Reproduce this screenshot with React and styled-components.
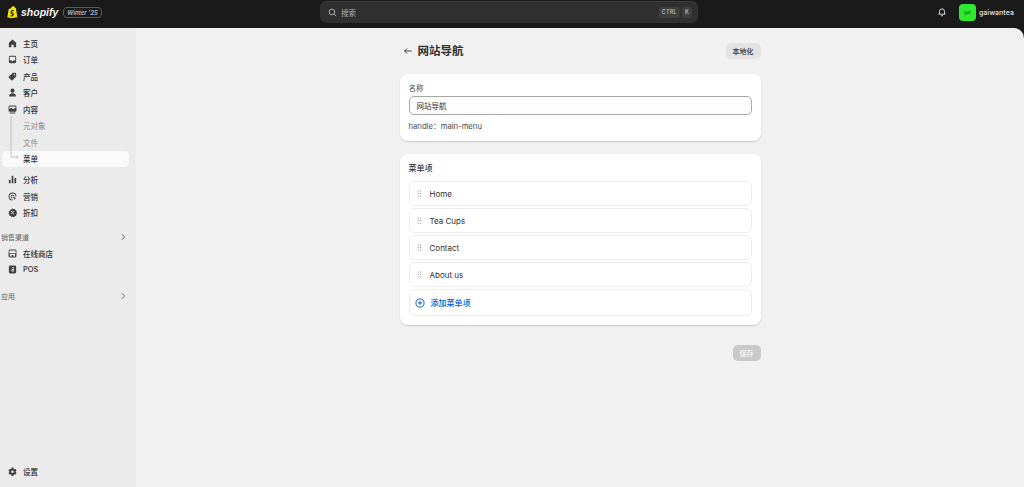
import React from "react";
import styled, { createGlobalStyle } from "styled-components";

const GlobalStyle = createGlobalStyle`
  html, body {
    margin: 0;
    padding: 0;
    height: 100%;
    overflow: hidden;
    background: #1a1a1a;
    font-family: Inter, "Noto Sans CJK SC", sans-serif;
    color: #303030;
  }
  #root { height: 100%; }
  * { box-sizing: border-box; }
`;

const Page = styled.div`
  width: 1024px;
  height: 487px;
  display: flex;
  flex-direction: column;
  background: #1a1a1a;
`;

const TopBar = styled.header`
  flex: 0 0 28px;
  display: grid;
  grid-template-columns: 313px 378px 1fr;
  align-items: center;
  padding: 0 3px 4px 7px;
  height: 28px;
`;

const Brand = styled.div`
  display: flex;
  align-items: center;
`;

const Wordmark = styled.span`
  margin-left: 3px;
  font-family: "Liberation Sans", sans-serif;
  font-style: italic;
  font-weight: 700;
  font-size: 10.5px;
  color: #f4f4f4;
`;

const Badge = styled.span`
  margin-left: 5px;
  height: 11px;
  padding: 0 3px;
  display: flex;
  align-items: center;
  border: 1px solid #5c5c5c;
  border-radius: 4px;
  font-size: 6px;
  font-style: italic;
  font-weight: 600;
  color: #b5bfc9;
  white-space: nowrap;
`;

const Search = styled.div`
  height: 22px;
  padding: 0 6px 0 8px;
  display: flex;
  align-items: center;
  background: #303030;
  border-radius: 7px;
  box-shadow: inset 0 1px 0 #3c3c3c;
`;

const SearchLabel = styled.span`
  flex: 1;
  margin-left: 4px;
  font-size: 7.5px;
  color: #b0b0b0;
`;

const Key = styled.span`
  height: 11px;
  margin-left: 2px;
  padding: 0 3px;
  display: flex;
  align-items: center;
  background: #3f3f3f;
  border-radius: 3px;
  font-size: 5.5px;
  font-weight: 600;
  letter-spacing: 0.2px;
  color: #b5b5b5;
`;

const TopRight = styled.div`
  display: flex;
  align-items: center;
  justify-content: flex-end;
  padding-right: 7px;
`;

const Store = styled.div`
  display: flex;
  align-items: center;
  margin-left: 12px;
`;

const StoreAvatar = styled.span`
  width: 17px;
  height: 17px;
  display: flex;
  align-items: center;
  justify-content: center;
  background: #2eea2e;
  border-radius: 4px;
  font-size: 4.5px;
  font-weight: 600;
  color: #0d7d0d;
`;

const StoreName = styled.span`
  margin-left: 3px;
  font-size: 7px;
  font-weight: 600;
  color: #d8d8d8;
`;

const Body = styled.div`
  flex: 1;
  min-height: 0;
  display: flex;
  overflow: hidden;
  border-radius: 0 10px 0 0;
  background: #f1f1f1;
`;

const Sidebar = styled.nav`
  flex: 0 0 136px;
  display: flex;
  flex-direction: column;
  padding: 7px 7px 7px 2px;
  background: #ebebeb;
`;

const NavRow = styled.div`
  position: relative;
  height: 16.5px;
  padding-left: 6px;
  display: flex;
  align-items: center;
  gap: 6px;
  border-radius: 5px;
  font-size: 7.5px;
  font-weight: ${(p) => (p.$sub ? 400 : 500)};
  color: ${(p) => (p.$sub ? "#8a8a8a" : "#303030")};
  background: ${(p) => (p.$active ? "#fafafa" : "transparent")};
  margin-bottom: ${(p) => (p.$gap ? `${p.$gap}px` : 0)};
`;

const NavIcon = styled.span`
  width: 9px;
  height: 9px;
  flex: none;
  display: flex;
`;

const NavIndent = styled.span`
  width: 9px;
  flex: none;
`;

const TreeLine = styled.svg`
  position: absolute;
  left: 8px;
  bottom: 7px;
  width: 10px;
  height: 44px;
`;

const SectionHead = styled.div`
  height: 16px;
  margin: ${(p) => p.$margin};
  padding-right: 2px;
  display: flex;
  align-items: center;
  justify-content: space-between;
  font-size: 7px;
  color: #5f5f5f;
`;

const Push = styled.div`
  margin-top: auto;
`;

const Main = styled.main`
  flex: 1;
  display: flex;
  justify-content: center;
  padding-top: 14px;
`;

const Column = styled.div`
  width: 361px;
`;

const Header = styled.div`
  height: 18px;
  margin-bottom: 14px;
  padding-left: 3px;
  display: flex;
  align-items: center;
`;

const Title = styled.h1`
  flex: 1;
  margin: -2px 0 0 5px;
  font-size: 11.5px;
  font-weight: 700;
  color: #303030;
`;

const LocalizeButton = styled.button`
  height: 16px;
  padding: 0 7px;
  border: 0;
  border-radius: 5px;
  background: #e3e3e3;
  font: 500 7px Inter, "Noto Sans CJK SC", sans-serif;
  color: #303030;
`;

const Card = styled.section`
  margin-bottom: 13px;
  padding: ${(p) => p.$padding};
  background: #fff;
  border-radius: 8px;
  box-shadow: 0 1px 1.5px rgba(0, 0, 0, 0.16);
`;

const FieldLabel = styled.label`
  display: block;
  height: 11px;
  line-height: 11px;
  margin-bottom: 2px;
  font-size: 7.5px;
  color: #4a4a4a;
`;

const TextField = styled.div`
  height: 19px;
  padding-left: 7px;
  display: flex;
  align-items: center;
  border: 1px solid #a8a8a8;
  border-radius: 5px;
  background: #fdfdfd;
  font-size: 7.5px;
  color: #303030;
`;

const Hint = styled.div`
  margin-top: 6px;
  font-size: 7.7px;
  line-height: 11px;
  color: #4a4a4a;
`;

const CardTitle = styled.h2`
  margin: 0 0 6px;
  height: 14px;
  line-height: 14px;
  font-size: 8px;
  font-weight: 500;
  color: #303030;
`;

const ItemList = styled.div`
  display: flex;
  flex-direction: column;
  gap: 2px;
`;

const Item = styled.div`
  height: ${(p) => (p.$add ? 27 : 25)}px;
  display: flex;
  align-items: center;
  padding-left: ${(p) => (p.$add ? 5 : 7)}px;
  border: 1px solid #ececec;
  border-radius: 6px;
  font-size: 8px;
  color: #303030;
`;

const ItemLabel = styled.span`
  margin-left: ${(p) => p.$offset}px;
`;

const AddLabel = styled.span`
  margin-left: 6px;
  font-size: 8px;
  font-weight: 500;
  color: #005bd3;
`;

const Footer = styled.div`
  display: flex;
  justify-content: flex-end;
  margin-top: 20px;
`;

const SaveButton = styled.button`
  width: 28px;
  height: 16px;
  padding: 0;
  border: 0;
  border-radius: 5px;
  background: #c9c9c9;
  font: 600 7px Inter, "Noto Sans CJK SC", sans-serif;
  color: #f3f3f3;
`;

const icons = {
  home: <path d="M8 1 1.500 6.500V14.500h4.500v-4.500h4v4.500h4.500V6.500z" />,
  orders: (
    <path
      fillRule="evenodd"
      d="M4 1.500h8A2.500 2.500 0 0 1 14.500 4v8a2.500 2.500 0 0 1-2.500 2.500H4A2.500 2.500 0 0 1 1.500 12V4A2.500 2.500 0 0 1 4 1.500zM3 9.500h3l1 1.500h2l1-1.500h3V4a1 1 0 0 0-1-1H4a1 1 0 0 0-1 1z"
    />
  ),
  products: (
    <path
      fillRule="evenodd"
      d="M9 1.500h4A1.500 1.500 0 0 1 14.500 3v5L8 14.500a1.500 1.500 0 0 1-2 0L1.500 10a1.500 1.500 0 0 1 0-2zM11.500 3.500a1 1 0 1 0 0 2.500 1 1 0 0 0 0-2.500z"
    />
  ),
  customers: (
    <path d="M8 1a3.700 3.700 0 1 1 0 7.400A3.700 3.700 0 0 1 8 1zM2 14c0-3 2.300-4.500 6-4.500s6 1.500 6 4.500v1H2z" />
  ),
  content: (
    <path
      fillRule="evenodd"
      d="M3 1h10a2 2 0 0 1 2 2v7a2 2 0 0 1-2 2H3a2 2 0 0 1-2-2V3a2 2 0 0 1 2-2zM2.500 3v4l3.500-2 3 2.500L13.500 5V3a.5.5 0 0 0-.5-.5H3a.5.5 0 0 0-.5.5zM3 13.500h10V15H3z"
    />
  ),
  analytics: <path d="M1.500 9h3v5.500h-3zM6.500 1.500h3v13h-3zM11.500 5.500h3v9h-3z" />,
  marketing: (
    <path
      fillRule="evenodd"
      d="M8 1a7 7 0 0 1 7 7h-1.700A5.300 5.300 0 1 0 8 13.300V15A7 7 0 0 1 8 1zM8 4.700A3.300 3.300 0 0 1 11.300 8H9.700A1.700 1.700 0 1 0 8 9.700v1.600a3.300 3.300 0 0 1 0-6.600zM9 8.500l6 2.200-2.500 1-1 2.800z"
    />
  ),
  discount: (
    <path
      fillRule="evenodd"
      d="M8 .5l2 1.500 2.500-.3.800 2.200 2.200 1.100-.4 2.500 1.400 2-1.700 1.700-.1 2.500-2.400.5-1.300 2.100-2.300-.8-2.400.8-1.300-2.100-2.400-.5-.1-2.500L.4 10.500l1.400-2-.4-2.500 2.200-1.100.8-2.200L6.900 2zM6 5a1 1 0 1 0 0 2 1 1 0 0 0 0-2zm4 4a1 1 0 1 0 0 2 1 1 0 0 0 0-2zM5.500 10l1 1 4-5-1-1z"
    />
  ),
  store: (
    <path
      fillRule="evenodd"
      d="M3.500 1h9A2.500 2.500 0 0 1 15 3.500v9a2.500 2.500 0 0 1-2.500 2.500h-9A2.500 2.500 0 0 1 1 12.500v-9A2.500 2.500 0 0 1 3.500 1zM3 2.700c-.4 0-.6.3-.6.700v4.100h11.200V3.400c0-.4-.2-.7-.6-.7zM3.500 9v4.300H6.500V10.500h3v2.800h3V9z"
    />
  ),
  pos: (
    <path
      fillRule="evenodd"
      d="M4 1h8a2.500 2.500 0 0 1 2.500 2.500v9A2.500 2.500 0 0 1 12 15H4a2.500 2.500 0 0 1-2.500-2.500v-9A2.500 2.500 0 0 1 4 1zM7 4v1.500h2.500V7H7.500L6 8.500v2L7.500 12H9l1.500-1.500v-1L9 8.500h1.500V4zm.5 5.500h1.500V11H7.500z"
    />
  ),
  settings: (
    <path
      fillRule="evenodd"
      d="M6.500 1h3l.5 2 1.700 1 2-.6 1.500 2.600-1.500 1.400v2l1.500 1.400-1.500 2.600-2-.6-1.700 1-.5 2h-3l-.5-2-1.700-1-2 .6L.8 10.800l1.500-1.400v-2L.8 6l1.500-2.600 2 .6L6 3zM8 6a2.300 2.300 0 1 0 0 4.600A2.300 2.300 0 0 0 8 6z"
    />
  ),
};

const Icon = ({ name }) => (
  <NavIcon>
    <svg viewBox="0 0 16 16" width="9" height="9" fill="#404040">
      {icons[name]}
    </svg>
  </NavIcon>
);

const Chevron = () => (
  <svg viewBox="0 0 10 10" width="8" height="8" fill="none" stroke="#616161" strokeWidth="1.200">
    <path d="M3.500 1.500 7 5 3.500 8.500" />
  </svg>
);

const DragHandle = () => (
  <svg viewBox="0 0 6 8" width="5" height="7" fill="#6b6b6b">
    {[1, 4].map((x) =>
      [1, 4, 7].map((y) => <circle key={`${x}-${y}`} cx={x + 0.5} cy={y} r="0.65" />)
    )}
  </svg>
);

const mainNav = [
  ["home", "主页"],
  ["orders", "订单"],
  ["products", "产品"],
  ["customers", "客户"],
  ["content", "内容"],
];

const moreNav = [
  ["analytics", "分析"],
  ["marketing", "营销"],
  ["discount", "折扣"],
];

const menuItems = ["Home", "Tea Cups", "Contact", "About us"];

const App = () => (
  <Page>
    <GlobalStyle />
    <TopBar>
      <Brand>
        <svg viewBox="0 0 16 18" width="11" height="14">
          <path d="M2.500 4.500 6 3.500C6.500 1.500 8 .5 9.500.8 11 1 11.500 2 11.700 3l1.300.2L15 16.500 5.500 18 .5 16.500z" fill="#f5e400" />
          <path d="M9.800 6.500 9.300 8.200c-1.300-.6-2.500-.2-2.500.6 0 1.200 3 1.500 3 4 0 2-1.500 3-3 2.900-1 0-1.800-.5-2.200-1l.5-1.500c.5.400 1.200.9 1.800.9.500 0 .8-.4.800-.8 0-1.500-2.500-1.600-2.500-4 0-2 1.500-3.500 3.500-3.500.4 0 .6.300.9.700z" fill="#1a1a1a" />
        </svg>
        <Wordmark>shopify</Wordmark>
        <Badge>Winter '25</Badge>
      </Brand>
      <Search>
        <svg viewBox="0 0 16 16" width="9" height="9" fill="none" stroke="#c4c4c4" strokeWidth="1.500">
          <circle cx="7" cy="7" r="5" />
          <path d="m11 11 3.500 3.500" />
        </svg>
        <SearchLabel>搜索</SearchLabel>
        <Key>CTRL</Key>
        <Key>K</Key>
      </Search>
      <TopRight>
        <svg viewBox="0 0 16 16" width="10" height="10" fill="none" stroke="#e3e3e3" strokeWidth="1.500">
          <path d="M3 11.500c1-1 1-2.500 1-4.500a4 4 0 0 1 8 0c0 2 0 3.500 1 4.500z" />
          <path d="M6.500 14h3" />
        </svg>
        <Store>
          <StoreAvatar>gai</StoreAvatar>
          <StoreName>gaiwantea</StoreName>
        </Store>
      </TopRight>
    </TopBar>
    <Body>
      <Sidebar>
        {mainNav.map(([icon, label]) => (
          <NavRow key={label}>
            <Icon name={icon} />
            {label}
          </NavRow>
        ))}
        <NavRow $sub>
          <NavIndent />
          元对象
        </NavRow>
        <NavRow $sub>
          <NavIndent />
          文件
        </NavRow>
        <NavRow $active $gap={4.500}>
          <TreeLine viewBox="0 0 10 44" fill="none" stroke="#b5b5b5" strokeWidth="0.800">
            <path d="M1 0v41h7M6.500 39.500 8 41l-1.500 1.500" />
          </TreeLine>
          <NavIndent />
          菜单
        </NavRow>
        {moreNav.map(([icon, label]) => (
          <NavRow key={label}>
            <Icon name={icon} />
            {label}
          </NavRow>
        ))}
        <SectionHead $margin="8px 0 0 -1px">
          销售渠道
          <Chevron />
        </SectionHead>
        <NavRow>
          <Icon name="store" />
          在线商店
        </NavRow>
        <NavRow>
          <Icon name="pos" />
          POS
        </NavRow>
        <SectionHead $margin="10px 0 0 -1px">
          应用
          <Chevron />
        </SectionHead>
        <Push>
          <NavRow>
            <Icon name="settings" />
            设置
          </NavRow>
        </Push>
      </Sidebar>
      <Main>
        <Column>
          <Header>
            <svg viewBox="0 0 16 16" width="10" height="10" fill="none" stroke="#303030" strokeWidth="1.400">
              <path d="M14 8H2.500M6.500 4 2.500 8l4 4" />
            </svg>
            <Title>网站导航</Title>
            <LocalizeButton>本地化</LocalizeButton>
          </Header>
          <Card $padding="9px 9px 9px">
            <FieldLabel>名称</FieldLabel>
            <TextField>网站导航</TextField>
            <Hint>handle：main-menu</Hint>
          </Card>
          <Card $padding="7px 9px 9px">
            <CardTitle>菜单项</CardTitle>
            <ItemList>
              {menuItems.map((item) => (
                <Item key={item}>
                  <DragHandle />
                  <ItemLabel $offset={8}>{item}</ItemLabel>
                </Item>
              ))}
              <Item $add>
                <svg viewBox="0 0 16 16" width="10" height="10" fill="none" stroke="#005bd3" strokeWidth="1.500">
                  <circle cx="8" cy="8" r="6.500" />
                  <path d="M8 4.800v6.400M4.800 8h6.400" />
                </svg>
                <AddLabel>添加菜单项</AddLabel>
              </Item>
            </ItemList>
          </Card>
          <Footer>
            <SaveButton>保存</SaveButton>
          </Footer>
        </Column>
      </Main>
    </Body>
  </Page>
);

export default App;
